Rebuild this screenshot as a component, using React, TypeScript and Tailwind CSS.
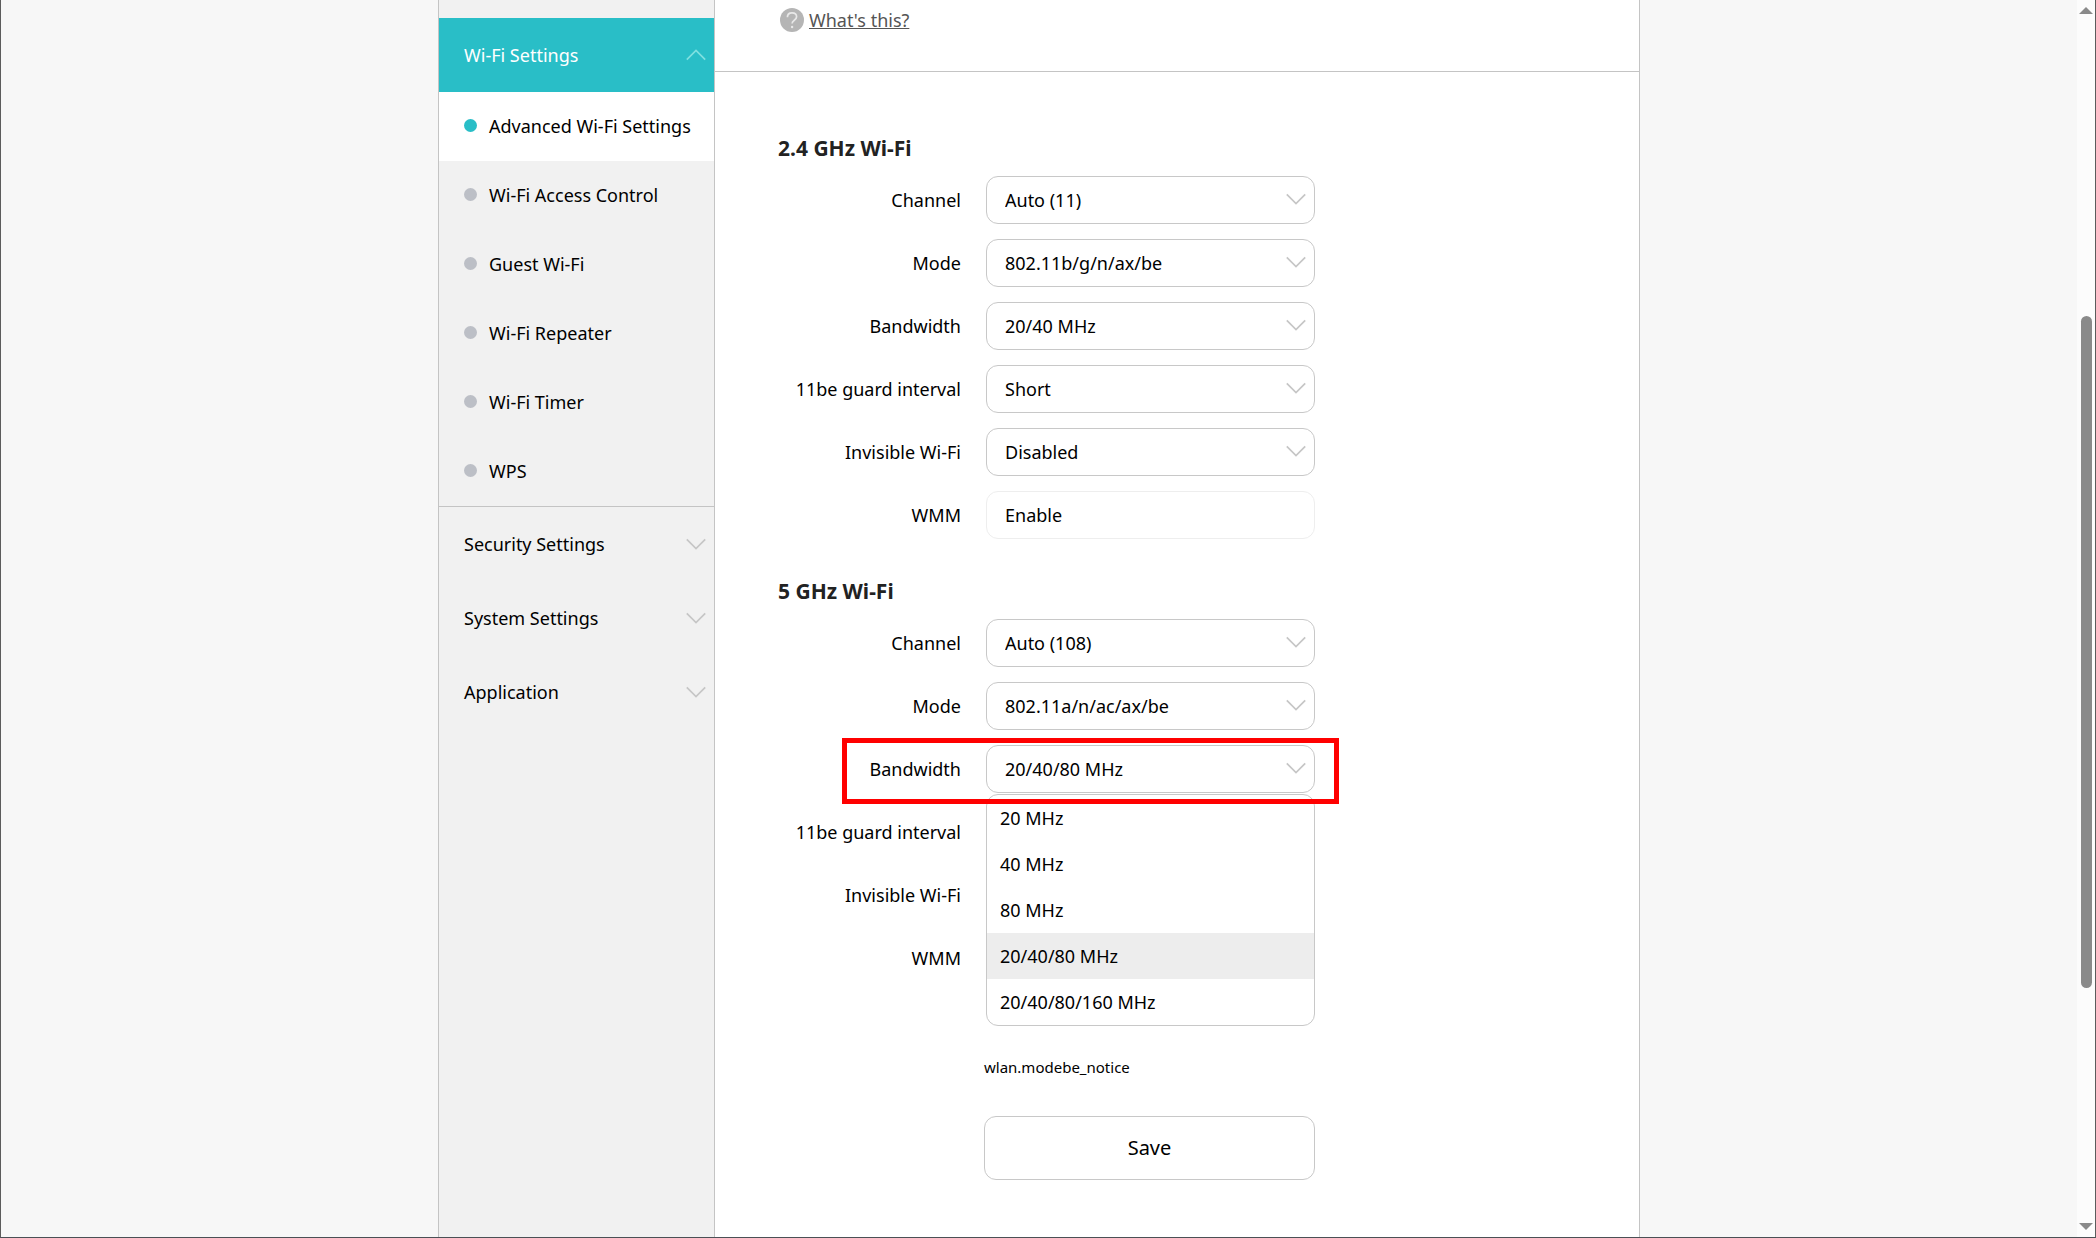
import { useState } from "react";

type Field = { id: string; label: string; value: string; readOnly?: boolean };

const band24: Field[] = [
  { id: "channel24", label: "Channel", value: "Auto (11)" },
  { id: "mode24", label: "Mode", value: "802.11b/g/n/ax/be" },
  { id: "bandwidth24", label: "Bandwidth", value: "20/40 MHz" },
  { id: "guard24", label: "11be guard interval", value: "Short" },
  { id: "invisible24", label: "Invisible Wi-Fi", value: "Disabled" },
  { id: "wmm24", label: "WMM", value: "Enable", readOnly: true },
];

const band5Top: Field[] = [
  { id: "channel5", label: "Channel", value: "Auto (108)" },
  { id: "mode5", label: "Mode", value: "802.11a/n/ac/ax/be" },
];

const band5Bottom = [
  { id: "guard5", label: "11be guard interval" },
  { id: "invisible5", label: "Invisible Wi-Fi" },
  { id: "wmm5", label: "WMM" },
];

const bandwidths = ["20 MHz", "40 MHz", "80 MHz", "20/40/80 MHz", "20/40/80/160 MHz"];

const wifiPages = [
  "Advanced Wi-Fi Settings",
  "Wi-Fi Access Control",
  "Guest Wi-Fi",
  "Wi-Fi Repeater",
  "Wi-Fi Timer",
  "WPS",
];

const sections = ["Security Settings", "System Settings", "Application"];

function Chevron({ up = false, className }: { up?: boolean; className: string }) {
  return (
    <svg
      viewBox="0 0 20 12"
      className={"h-3 w-5 shrink-0 " + className}
      fill="none"
      stroke="currentColor"
      strokeWidth="1.7"
      aria-hidden="true"
    >
      <path d={up ? "M0.8 10.6 10 1.4l9.2 9.2" : "M0.8 1.4 10 10.6l9.2-9.2"} />
    </svg>
  );
}

function Row({ id, label, children }: { id: string; label: string; children?: React.ReactNode }) {
  return (
    <div className="flex h-12 items-center gap-[25px]">
      <label htmlFor={id} className="w-[183px] shrink-0 text-right whitespace-nowrap">
        {label}
      </label>
      <div className="relative h-full w-[329px]">{children}</div>
    </div>
  );
}

function SelectBox({
  id,
  value,
  options,
  onChange,
}: {
  id: string;
  value: string;
  options: string[];
  onChange?: (value: string) => void;
}) {
  return (
    <>
      <select
        id={id}
        value={value}
        onChange={(e) => onChange?.(e.target.value)}
        className="h-full w-full appearance-none rounded-xl border border-[#c8c8c8] bg-white pr-10 pl-[18px] text-black"
      >
        {options.map((o) => (
          <option key={o}>{o}</option>
        ))}
      </select>
      <Chevron className="pointer-events-none absolute top-[17px] right-[9px] text-[#c6c6c6]" />
    </>
  );
}

function FieldRow({ field }: { field: Field }) {
  return (
    <Row id={field.id} label={field.label}>
      {field.readOnly ? (
        <input
          id={field.id}
          readOnly
          value={field.value}
          className="h-full w-full rounded-xl border border-[#eeeeee] bg-white px-[18px] text-black"
        />
      ) : (
        <SelectBox id={field.id} value={field.value} options={[field.value]} />
      )}
    </Row>
  );
}

function Sidebar() {
  return (
    <nav className="w-[277px] shrink-0 border-x border-[#c4c4c4] bg-[#f1f1f1] pt-[18px]">
      <button className="flex h-[74px] w-full items-center justify-between bg-[#29bec7] pr-2 pl-[25px] text-white">
        Wi-Fi Settings
        <Chevron up className="text-[#7fe0e0]" />
      </button>
      <ul className="border-b border-[#c4c4c4]">
        {wifiPages.map((page, i) => (
          <li key={page} className={i === 0 ? "bg-white" : ""}>
            <a href="#" className="flex h-[69px] items-center gap-3 pb-0.5 pl-[25px] whitespace-nowrap">
              <span className={"size-[13px] rounded-full " + (i === 0 ? "bg-[#29bec7]" : "bg-[#bcbfc6]")} />
              {page}
            </a>
          </li>
        ))}
      </ul>
      {sections.map((s) => (
        <button key={s} className="flex h-[74px] w-full items-center justify-between pr-2 pl-[25px]">
          {s}
          <Chevron className="text-[#c6c6c6]" />
        </button>
      ))}
    </nav>
  );
}

function Scrollbar() {
  return (
    <div className="flex w-[18px] shrink-0 flex-col items-center bg-[#fcfcfc] py-[7px]" aria-hidden="true">
      <svg viewBox="0 0 14 7" className="h-[7px] w-3.5" fill="#8a8a8a">
        <path d="M0 7 7 0l7 7z" />
      </svg>
      <div className="flex-[302]" />
      <div className="w-[11px] flex-[672] rounded-full bg-[#8a8a8a]" />
      <div className="flex-[235]" />
      <svg viewBox="0 0 14 7" className="h-[7px] w-3.5" fill="#8a8a8a">
        <path d="M0 0h14L7 7z" />
      </svg>
    </div>
  );
}

export default function App() {
  const [bandwidth, setBandwidth] = useState("20/40/80 MHz");

  return (
    <div className="flex h-screen overflow-hidden border-x border-b border-x-[#5c5c5c] border-b-[#4b5055] bg-[#f7f7f7] font-['Noto_Sans','Open_Sans',sans-serif] text-[18px] leading-6 text-black">
      <div className="flex flex-1 justify-center">
        <div className="flex w-full max-w-[1202px]">
          <Sidebar />
          <main className="flex-1 border-r border-[#c4c4c4] bg-white">
            <div className="flex h-[72px] items-start gap-[5px] border-b border-[#c4c4c4] pt-2 pl-[65px]">
              <svg viewBox="0 0 24 24" className="size-6" aria-hidden="true">
                <circle cx="12" cy="12" r="12" fill="#b5b5b5" />
                <path
                  d="M7.4 9.2c0-2.7 2-4.4 4.6-4.4s4.6 1.6 4.6 4c0 3.4-4.5 3.4-4.5 6.6"
                  fill="none"
                  stroke="#e8e8e8"
                  strokeWidth="1.7"
                />
                <circle cx="12.1" cy="19" r="1.2" fill="#e8e8e8" />
              </svg>
              <a href="#" className="text-[#555555] underline">
                What's this?
              </a>
            </div>

            <form className="pl-[63px]" onSubmit={(e) => e.preventDefault()}>
              <section className="pt-16">
                <h2 className="text-[21px] leading-6 font-bold text-[#222222]">2.4 GHz Wi-Fi</h2>
                <div className="mt-4 flex flex-col gap-[15px]">
                  {band24.map((f) => (
                    <FieldRow key={f.id} field={f} />
                  ))}
                </div>
              </section>

              <section className="pt-10">
                <h2 className="text-[21px] leading-6 font-bold text-[#222222]">5 GHz Wi-Fi</h2>
                <div className="mt-4 flex flex-col gap-[15px]">
                  {band5Top.map((f) => (
                    <FieldRow key={f.id} field={f} />
                  ))}
                  <div className="relative">
                    <Row id="bandwidth5" label="Bandwidth">
                      <SelectBox id="bandwidth5" value={bandwidth} options={bandwidths} onChange={setBandwidth} />
                      <ul
                        role="listbox"
                        aria-label="Bandwidth"
                        className="absolute top-[49px] left-0 z-10 w-full overflow-hidden rounded-xl border border-[#c8c8c8] bg-white"
                      >
                        {bandwidths.map((b) => (
                          <li
                            key={b}
                            role="option"
                            aria-selected={b === bandwidth}
                            onClick={() => setBandwidth(b)}
                            className={"flex h-[46px] items-center pl-[13px] " + (b === bandwidth ? "bg-[#ededed]" : "")}
                          >
                            {b}
                          </li>
                        ))}
                      </ul>
                    </Row>
                    <div className="pointer-events-none absolute -top-[7px] left-16 z-20 h-[66px] w-[497px] border-5 border-[#ff0000]" />
                  </div>
                  {band5Bottom.map((f) => (
                    <Row key={f.id} id={f.id} label={f.label} />
                  ))}
                </div>
              </section>

              <div className="mt-[73px] ml-[206px] w-[331px]">
                <p className="text-[15px]">wlan.modebe_notice</p>
                <button className="mt-[37px] h-16 w-full rounded-xl border border-[#c8c8c8] bg-white text-[20px]">
                  Save
                </button>
              </div>
            </form>
          </main>
        </div>
      </div>
      <Scrollbar />
    </div>
  );
}
